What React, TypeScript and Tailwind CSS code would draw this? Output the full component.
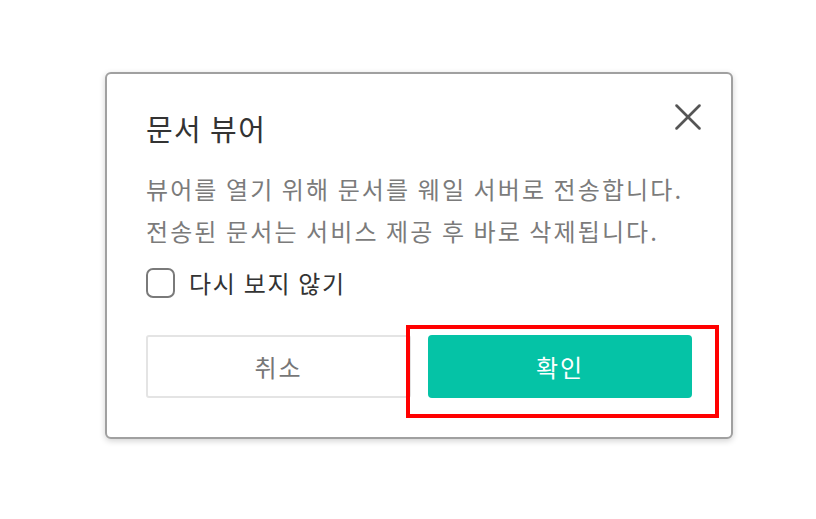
import { X } from 'lucide-react'

export default function App() {
  return (
    <div
      className="w-full h-[519px] bg-white pt-[72px] pl-[105px]"
      style={{ fontFamily: '"Noto Sans CJK KR", "Noto Sans", sans-serif' }}
    >
      {/* Dialog */}
      <div className="relative w-[628px] h-[367px] rounded-[6px] border-2 border-[#a0a0a0] bg-white shadow-[0_2px_6px_rgba(0,0,0,0.18)] px-[39px] pt-[34px]">
        <button className="absolute right-[20px] top-[20px] text-[#555]">
          <X className="w-[46px] h-[46px]" strokeWidth={1.35} />
        </button>

        <h2 className="text-[29px] leading-[40px] text-[#333] tracking-[1.4px]">문서 뷰어</h2>

        <div className="mt-[20px] text-[24px] leading-[42px] text-[#7b7b7b] tracking-[2.1px] whitespace-nowrap">
          <p>뷰어를 열기 위해 문서를 웨일 서버로 전송합니다.</p>
          <p>전송된 문서는 서비스 제공 후 바로 삭제됩니다.</p>
        </div>

        <label className="mt-[16px] flex items-center gap-[14px]">
          <span className="w-[29px] h-[30px] rounded-[7px] border-2 border-[#7a7a7a] bg-white" />
          <span className="text-[24px] leading-[30px] text-[#333] tracking-[1.7px]">다시 보지 않기</span>
        </label>

        {/* Actions */}
        <div className="mt-[37px] flex gap-[17px]">
          <button className="w-[265px] h-[63px] rounded-[3px] border-2 border-[#e4e4e4] bg-white text-[24px] text-[#777] tracking-[2px]">
            취소
          </button>
          <div className="relative">
            <button className="w-[264px] h-[63px] rounded-[4px] bg-[#05c3a6] text-[24px] text-white tracking-[2px]">
              확인
            </button>
            {/* annotation box */}
            <div className="absolute -left-[22px] -top-[10px] -right-[27px] -bottom-[20px] border-4 border-[#ff0000] pointer-events-none" />
          </div>
        </div>
      </div>
    </div>
  )
}
